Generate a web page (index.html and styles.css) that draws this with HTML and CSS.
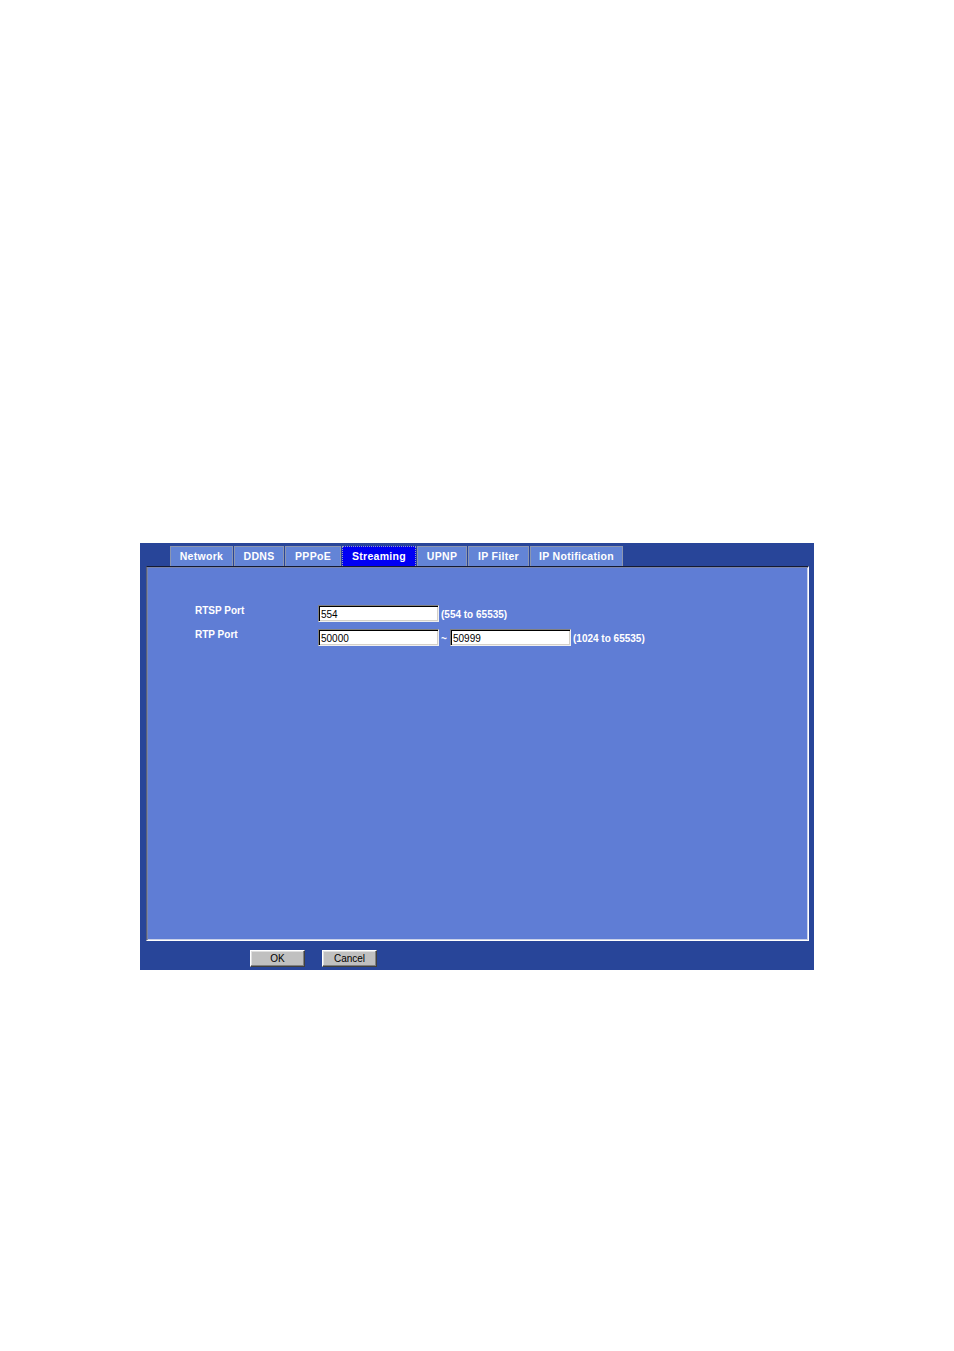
FILE: index.html
```html
<!DOCTYPE html>
<html>
<head>
<meta charset="utf-8">
<link rel="stylesheet" href="styles.css">
</head>
<body>
<div class="frame">
  <div class="tabs">
    <div class="tab w-network">Network</div>
    <div class="tab w-ddns">DDNS</div>
    <div class="tab w-pppoe">PPPoE</div>
    <div class="tab tab-active w-streaming">Streaming</div>
    <div class="tab w-upnp">UPNP</div>
    <div class="tab w-ipfilter">IP Filter</div>
    <div class="tab w-ipnotif">IP Notification</div>
  </div>
  <div class="panel">
    <div class="row">
      <div class="label">RTSP Port</div>
      <div class="field"><input class="input" type="text" value="554"></div>
      <div class="hint">(554 to 65535)</div>
    </div>
    <div class="row">
      <div class="label">RTP Port</div>
      <div class="field"><input class="input" type="text" value="50000"></div>
      <div class="tilde">~</div>
      <div class="field"><input class="input" type="text" value="50999"></div>
      <div class="hint">(1024 to 65535)</div>
    </div>
  </div>
  <div class="buttons">
    <button class="btn btn-ok">OK</button>
    <button class="btn btn-cancel">Cancel</button>
  </div>
</div>
</body>
</html>
```

FILE: styles.css
```css
html, body {
  margin: 0;
  padding: 0;
  background: #ffffff;
}
body {
  font-family: "Liberation Sans", Arial, sans-serif;
  width: 954px;
  height: 1351px;
}
.frame {
  margin-top: 543px;
  margin-left: 140px;
  width: 674px;
  height: 427px;
  background: #284599;
  box-sizing: border-box;
  padding-top: 3px;
}
.tabs {
  display: flex;
  gap: 1px;
  padding-left: 30px;
  height: 20px;
}
.tab {
  box-sizing: border-box;
  height: 20px;
  background: #6384d6;
  border: 1px solid #8c96b0;
  border-bottom: none;
  color: #ffffff;
  font-weight: bold;
  font-size: 10.5px;
  letter-spacing: 0.3px;
  line-height: 19px;
  text-align: center;
  white-space: nowrap;
}
.tab-active {
  background: #0000f4;
  border: 1px dotted #9aa0b8;
  border-bottom: none;
}
.w-network { width: 63px; }
.w-ddns { width: 50px; }
.w-pppoe { width: 56px; }
.w-streaming { width: 74px; }
.w-upnp { width: 50px; }
.w-ipfilter { width: 61px; }
.w-ipnotif { width: 93px; }
.panel {
  margin-left: 6px;
  width: 663px;
  height: 375px;
  box-sizing: border-box;
  background: #5f7dd5;
  border-top: 1px solid #141a33;
  border-left: 1px solid #5a6078;
  border-right: 1px solid #ffffff;
  border-bottom: 1px solid #ffffff;
  box-shadow: inset 1px 1px 0 #7a84a8, inset -1px -1px 0 #c8d0e8;
  padding-top: 38px;
  padding-left: 48px;
  display: flex;
  flex-direction: column;
  gap: 7px;
}
.row {
  display: flex;
  align-items: flex-start;
  height: 17px;
}
.label {
  width: 123px;
  color: #ffffff;
  font-weight: bold;
  font-size: 10px;
  line-height: 11px;
}
.field {
  display: flex;
}
.input {
  box-sizing: border-box;
  width: 121px;
  height: 17px;
  margin: 0;
  padding: 1px 2px 0;
  font-family: "Liberation Sans", Arial, sans-serif;
  font-size: 10px;
  color: #000000;
  background: #ffffff;
  border: 1px solid;
  border-color: #808080 #f0f0f0 #f0f0f0 #808080;
  box-shadow: inset 1px 1px 0 #000000, inset -1px -1px 0 #d4d0c8;
  outline: none;
}
.hint {
  color: #ffffff;
  font-weight: bold;
  font-size: 10px;
  line-height: 11px;
  padding-top: 4px;
  padding-left: 2px;
  white-space: nowrap;
}
.tilde {
  color: #ffffff;
  font-weight: bold;
  font-size: 10px;
  line-height: 11px;
  padding-top: 4px;
  width: 11px;
  box-sizing: border-box;
  padding-left: 2px;
}
.buttons {
  display: flex;
  gap: 17px;
  padding-left: 110px;
  margin-top: 9px;
}
.btn {
  box-sizing: border-box;
  width: 55px;
  height: 17px;
  margin: 0;
  padding: 0;
  background: #c0c0c0;
  font-family: "Liberation Sans", Arial, sans-serif;
  font-size: 10px;
  color: #000000;
  border: 1px solid;
  border-color: #ffffff #404040 #404040 #ffffff;
  box-shadow: inset -1px -1px 0 #808080, inset 1px 1px 0 #dfdfdf;
  line-height: 14px;
}
```
